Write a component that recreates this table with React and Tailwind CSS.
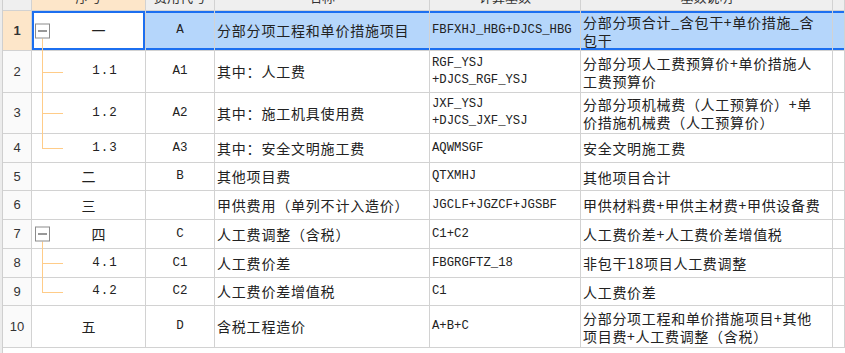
import React from "react";

const cjk = "font-['Noto_Sans_CJK_SC','Noto_Sans',sans-serif]";
const mono = "font-['Liberation_Mono','Noto_Sans_CJK_SC',monospace]";

const rows = [
  { n: 1, no: "一", code: "A", name: "分部分项工程和单价措施项目", base: ["FBFXHJ_HBG+DJCS_HBG"], desc: ["分部分项合计_含包干+单价措施_含", "包干"], h: "h-[40px]", tree: "open" },
  { n: 2, no: "1.1", code: "A1", name: "其中：人工费", base: ["RGF_YSJ", "+DJCS_RGF_YSJ"], desc: ["分部分项人工费预算价+单价措施人", "工费预算价"], h: "h-[42px]", tree: "child" },
  { n: 3, no: "1.2", code: "A2", name: "其中：施工机具使用费", base: ["JXF_YSJ", "+DJCS_JXF_YSJ"], desc: ["分部分项机械费（人工预算价）+单", "价措施机械费（人工预算价）"], h: "h-[41px]", tree: "child" },
  { n: 4, no: "1.3", code: "A3", name: "其中：安全文明施工费", base: ["AQWMSGF"], desc: ["安全文明施工费"], h: "h-[29px]", tree: "last" },
  { n: 5, no: "二", code: "B", name: "其他项目费", base: ["QTXMHJ"], desc: ["其他项目合计"], h: "h-[28px]" },
  { n: 6, no: "三", code: "", name: "甲供费用（单列不计入造价）", base: ["JGCLF+JGZCF+JGSBF"], desc: ["甲供材料费+甲供主材费+甲供设备费"], h: "h-[29px]" },
  { n: 7, no: "四", code: "C", name: "人工费调整（含税）", base: ["C1+C2"], desc: ["人工费价差+人工费价差增值税"], h: "h-[29px]", tree: "open" },
  { n: 8, no: "4.1", code: "C1", name: "人工费价差", base: ["FBGRGFTZ_18"], desc: ["非包干18项目人工费调整"], h: "h-[29px]", tree: "child" },
  { n: 9, no: "4.2", code: "C2", name: "人工费价差增值税", base: ["C1"], desc: ["人工费价差"], h: "h-[28px]", tree: "last" },
  { n: 10, no: "五", code: "D", name: "含税工程造价", base: ["A+B+C"], desc: ["分部分项工程和单价措施项目+其他", "项目费+人工费调整（含税）"], h: "h-[42px]" },
];

const line = "border-r border-b border-[#d2d2d2]";
const rowSel = "shadow-[inset_0_2px_0_#1c6ff0,inset_0_-2px_0_#1c6ff0] bg-[#b5d6fb]";

// tree connectors in the 序号 column
const Tree = ({ type }) => {
  if (type === "open")
    return (
      <>
        <span className="absolute left-[10px] top-[calc(50%+7px)] bottom-[-1px] w-px bg-[#ffcc88]" />
        <span className="absolute left-[3px] top-1/2 -translate-y-1/2 w-[15px] h-[15px] border border-[#8c8c8c] bg-white flex items-center justify-center">
          <span className="w-[9px] h-px bg-[#333]" />
        </span>
      </>
    );
  if (type === "child")
    return (
      <>
        <span className="absolute left-[10px] top-0 bottom-[-1px] w-px bg-[#ffcc88]" />
        <span className="absolute left-[10px] top-1/2 w-[21px] h-px bg-[#ffcc88]" />
      </>
    );
  return (
    <>
      <span className="absolute left-[10px] top-0 h-1/2 w-px bg-[#ffcc88]" />
      <span className="absolute left-[10px] top-1/2 w-[21px] h-px bg-[#ffcc88]" />
    </>
  );
};

const Row = ({ r }) => {
  const sel = r.n === 1;
  const isNum = /\d/.test(r.no);
  const pad = r.tree === "open" ? "pl-[20px]" : r.tree ? "pl-[33px]" : "";
  return (
    <div className={`flex ${r.h}`}>
      <div className="w-[3px] shrink-0 bg-[#ececec] border-r border-[#cfcfcf]" />
      <div
        className={`w-[29px] shrink-0 ${line} flex items-center justify-center text-[13px] text-[#333] font-['Liberation_Sans',sans-serif] ${
          sel ? "bg-[#fde6c9] font-bold" : "bg-[#fafafa]"
        }`}
      >
        {r.n}
      </div>
      <div
        className={`relative w-[114px] shrink-0 ${line} ${pad} flex items-center justify-center ${
          sel ? "bg-white shadow-[inset_0_0_0_2px_#1c6ff0]" : ""
        }`}
      >
        {r.tree && <Tree type={r.tree} />}
        <span className={`flex-1 text-center text-[#222] ${isNum ? `${mono} text-[12.5px] tracking-[1px]` : `${cjk} text-[14px]`}`}>
          {r.no}
        </span>
      </div>
      <div className={`w-[69px] shrink-0 ${line} flex items-center justify-center ${mono} text-[12.5px] text-[#222] ${sel ? rowSel : ""}`}>
        {r.code}
      </div>
      <div className={`w-[215px] shrink-0 ${line} flex items-center pl-[2px] ${cjk} text-[14px] tracking-[0.8px] text-[#222] whitespace-nowrap ${sel ? rowSel : ""}`}>
        {r.name}
      </div>
      <div className={`w-[151px] shrink-0 ${line} flex flex-col justify-center pl-[2px] ${mono} text-[12.25px] leading-[17px] text-[#222] whitespace-nowrap ${sel ? rowSel : ""}`}>
        {r.base.map((t) => (
          <span key={t}>{t}</span>
        ))}
      </div>
      <div className={`w-[252px] shrink-0 ${line} flex flex-col justify-center pl-[2px] ${cjk} text-[14px] tracking-[0.7px] leading-[18px] text-[#222] whitespace-nowrap overflow-hidden ${sel ? rowSel : ""}`}>
        {r.desc.map((t) => (
          <span key={t}>{t}</span>
        ))}
      </div>
      <div className={`flex-1 ${line} ${sel ? rowSel : ""}`} />
    </div>
  );
};

const headers = [
  { t: "", w: "w-[29px]" },
  { t: "序号", w: "w-[114px]", hl: true },
  { t: "费用代号", w: "w-[69px]" },
  { t: "名称", w: "w-[215px]" },
  { t: "计算基数", w: "w-[151px]" },
  { t: "基数说明", w: "w-[252px]" },
];

const App = () => {
  return (
    <div className="w-[845px] h-[353px] overflow-hidden bg-white">
      {/* header row, scrolled partly out of view */}
      <div className="h-[11px] overflow-hidden">
        <div className="flex h-[28px] -mt-[17px]">
          <div className="w-[3px] shrink-0 bg-[#ececec] border-r border-[#cfcfcf]" />
          {headers.map((h) => (
            <div
              key={h.w + h.t}
              className={`${h.w} shrink-0 ${line} flex items-center justify-center ${cjk} text-[13px] text-[#333] ${
                h.hl ? "bg-[#fde6c9]" : "bg-[#efefef]"
              }`}
            >
              {h.t}
            </div>
          ))}
          <div className={`flex-1 ${line} bg-[#efefef]`} />
        </div>
      </div>
      {rows.map((r) => (
        <Row key={r.n} r={r} />
      ))}
      <div className="flex h-[10px]">
        <div className="w-[3px] shrink-0 bg-[#ececec] border-r border-[#cfcfcf]" />
      </div>
    </div>
  );
};

export default App;
